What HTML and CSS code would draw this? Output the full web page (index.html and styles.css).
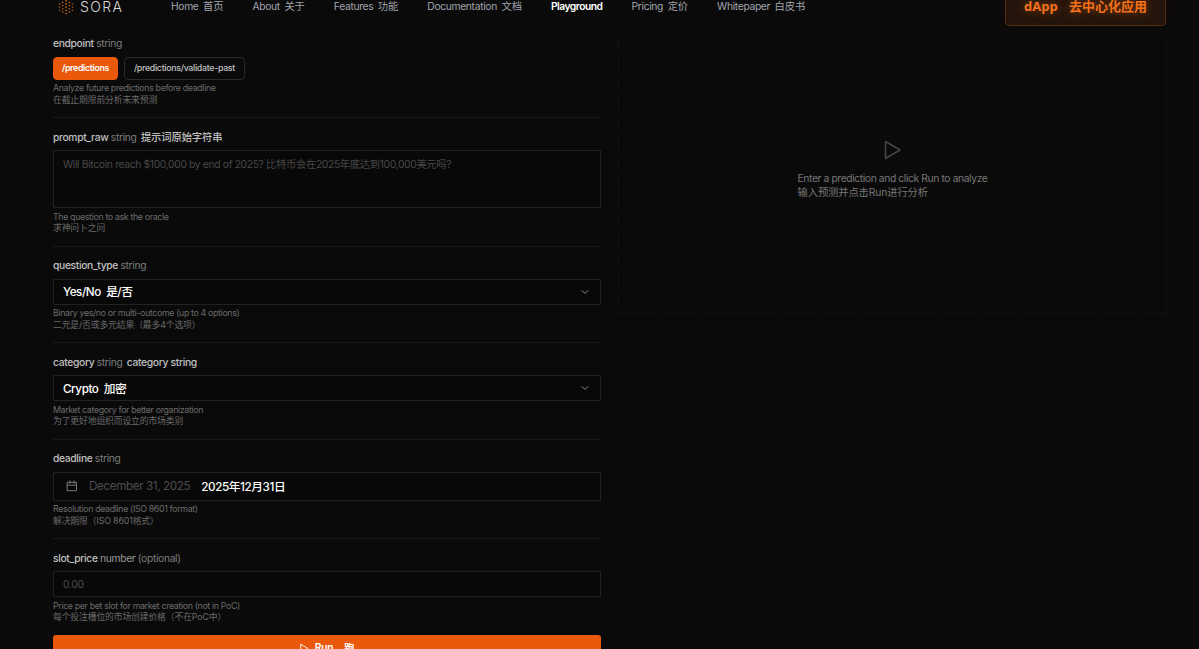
FILE: index.html
```
<!DOCTYPE html>
<html lang="en">
  <head>
    <meta charset="UTF-8" />
    <meta name="viewport" content="width=device-width, initial-scale=1.0" />
    <title>SORA Playground</title>
    <link rel="stylesheet" href="styles.css">
  </head>
  <body>
    <header class="navbar">
      <a class="logo">
        <svg class="logo-mark" viewBox="0 0 16 18" stroke-linecap="round" stroke-width="1.6" fill="none">
          <path stroke="#9a4d10" stroke-dasharray="0.1 3.1" d="M1.5 5.9v7M14.5 5.9v7" />
          <path stroke="#b9590f" stroke-dasharray="0.1 3.1" d="M4.7 4.3v10M11.3 4.3v10" />
          <path stroke="#d9731a" stroke-dasharray="0.1 3.1" d="M8 2.7v13" />
        </svg>
        <span>SORA</span>
      </a>
      <nav class="menu">
        <a>Home <span class="zh">首页</span></a>
        <a>About <span class="zh">关于</span></a>
        <a>Features <span class="zh">功能</span></a>
        <a>Documentation <span class="zh">文档</span></a>
        <a class="active">Playground</a>
        <a>Pricing <span class="zh">定价</span></a>
        <a>Whitepaper <span class="zh">白皮书</span></a>
      </nav>
      <button class="dapp-btn">dApp <span>去中心化应用</span></button>
    </header>

    <main class="playground">
      <form class="params">
        <div class="field">
          <label>endpoint <em>string</em></label>
          <div class="endpoints">
            <button type="button" class="endpoint selected">/predictions</button>
            <button type="button" class="endpoint">/predictions/validate-past</button>
          </div>
          <p class="help">Analyze future predictions before deadline<br /><span class="zh">在截止期限前分析未来预测</span></p>
        </div>

        <div class="field">
          <label>prompt_raw <em>string</em> <span class="translated zh">提示词原始字符串</span></label>
          <div class="control prompt">Will Bitcoin reach $100,000 by end of 2025? 比特币会在2025年底达到100,000美元吗?</div>
          <p class="help">The question to ask the oracle<br /><span class="zh">求神问卜之问</span></p>
        </div>

        <div class="field">
          <label>question_type <em>string</em></label>
          <div class="control select">
            <span>Yes/No&nbsp; 是/否</span>
            <svg class="chevron" viewBox="0 0 10 10"><path d="M2 3.5l3 3 3-3" /></svg>
          </div>
          <p class="help">Binary yes/no or multi-outcome (up to 4 options)<br /><span class="zh">二元是/否或多元结果（最多4个选项）</span></p>
        </div>

        <div class="field">
          <label>category <em>string</em> <span class="translated">category string</span></label>
          <div class="control select">
            <span>Crypto&nbsp; 加密</span>
            <svg class="chevron" viewBox="0 0 10 10"><path d="M2 3.5l3 3 3-3" /></svg>
          </div>
          <p class="help">Market category for better organization<br /><span class="zh">为了更好地组织而设立的市场类别</span></p>
        </div>

        <div class="field">
          <label>deadline <em>string</em></label>
          <div class="control date">
            <svg class="calendar" viewBox="0 0 12 12"><path d="M1.5 2.3h9v8.4h-9zM1.5 5.2h9M3.9 0.8v2.6M8.1 0.8v2.6" /></svg>
            <span class="placeholder">December 31, 2025</span>
            <span class="value">2025年12月31日</span>
          </div>
          <p class="help">Resolution deadline (ISO 8601 format)<br /><span class="zh">解决期限（ISO 8601格式）</span></p>
        </div>

        <div class="field">
          <label>slot_price <em class="number">number</em> <em>(optional)</em></label>
          <div class="control price">0.00</div>
          <p class="help">Price per bet slot for market creation (not in PoC)<br /><span class="zh">每个投注槽位的市场创建价格（不在PoC中）</span></p>
        </div>

        <button type="button" class="run-btn">
          <svg viewBox="0 0 10 12"><path d="M1.2 1.5l7.6 4.5-7.6 4.5z" /></svg>
          <span>Run</span>
          <span>跑</span>
        </button>
      </form>

      <section class="result">
        <svg class="play" viewBox="0 0 18 20"><path d="M1.5 1.5l14.5 8.5-14.5 8.5z" /></svg>
        <p>Enter a prediction and click Run to analyze<br /><span class="zh">输入预测并点击Run进行分析</span></p>
      </section>
    </main>
  </body>
</html>
```
FILE: styles.css
```
* {
  margin: 0;
  padding: 0;
  box-sizing: border-box;
}

body {
  height: 100vh;
  overflow: hidden;
  background-color: #0a0a0a;
  color: #fff;
  font-family: Inter, "Noto Sans CJK SC", sans-serif;
  letter-spacing: -0.34px;
}

button {
  font-family: inherit;
  letter-spacing: inherit;
  cursor: pointer;
}

em {
  font-style: normal;
}

svg path {
  fill: none;
  stroke-linecap: round;
  stroke-linejoin: round;
}

.zh {
  letter-spacing: -0.12px;
}

/* the bar is pulled up, only its lower half shows */
.navbar {
  height: 40px;
  margin-top: -14px;
  padding: 0 33px 0 58px;
  display: flex;
  align-items: center;
}

.logo {
  width: 113px;
  display: flex;
  align-items: center;
  gap: 6px;
  padding-top: 1px;
  color: #d8d8d8;
  font-size: 14px;
  font-weight: 300;
  letter-spacing: 1.4px;
}

.logo-mark {
  width: 16px;
  height: 18px;
}

.menu {
  display: flex;
  gap: 29.1px;
  color: #a1a5ae;
  font-size: 10.3px;
  line-height: 16px;
  white-space: nowrap;
}

.menu span {
  margin-left: 2px;
}

.menu .active {
  color: #fff;
  font-weight: 600;
  letter-spacing: -0.5px;
}

.dapp-btn {
  width: 161px;
  height: 40px;
  margin-left: auto;
  padding-bottom: 1px;
  border: 1px solid #512b12;
  border-radius: 4px;
  background-color: #24150c;
  box-shadow: 0 0 24px rgba(234, 88, 12, 0.06);
  color: #f5711a;
  font-family: "Open Sans", "Noto Sans CJK SC", sans-serif;
  font-size: 13px;
  font-weight: 700;
  letter-spacing: 0;
  text-shadow: 0 0 10px rgba(249, 115, 22, 0.5);
}

.dapp-btn span {
  margin-left: 8px;
}

.playground {
  display: flex;
  gap: 17px;
  padding: 0 32px 0 53px;
}

.params {
  width: 548px;
  flex-shrink: 0;
}

.field {
  height: 96.5px;
  padding-top: 11.5px;
  border-top: 1px solid #191919;
}

.field:first-child {
  height: 91px;
  padding-top: 9px;
  border-top: 1px solid transparent;
}

.field:nth-child(2) {
  height: 128.5px;
}

.field:nth-child(5) {
  height: 99.5px;
}

.field label {
  display: block;
  height: 15px;
  margin-bottom: 5.5px;
  color: #c0c0c0;
  font-size: 10.3px;
  font-weight: 500;
  line-height: 15px;
  white-space: nowrap;
}

.field label em {
  color: #7d7d7d;
  font-weight: 400;
}

.field label .number {
  color: #979797;
}

.translated {
  margin-left: 2px;
}

.endpoints {
  display: flex;
  gap: 6px;
}

.endpoint {
  height: 23px;
  padding: 0 9px 1px;
  border: 1px solid #292929;
  border-radius: 4px;
  background: transparent;
  color: #c2c2c2;
  font-size: 8.8px;
  font-weight: 500;
  letter-spacing: -0.3px;
}

.endpoint.selected {
  padding: 0 8px 1px;
  border-color: #ea580c;
  background-color: #ea580c;
  color: #fff;
  font-weight: 600;
  letter-spacing: -0.36px;
}

.help {
  margin-top: 2.5px;
  color: #6b6b6b;
  font-size: 8.8px;
  line-height: 11.5px;
  white-space: nowrap;
}

.control {
  height: 26px;
  padding: 0 9px;
  display: flex;
  align-items: center;
  border: 1px solid #222;
  border-radius: 1px;
  background-color: #080808;
  white-space: nowrap;
}

.prompt {
  height: 58px;
  padding-top: 6px;
  align-items: flex-start;
  color: #494949;
  font-size: 10.3px;
  line-height: 15px;
}

.select {
  justify-content: space-between;
  font-size: 11.7px;
  font-weight: 500;
  letter-spacing: -0.45px;
}

.select span {
  padding-bottom: 1.5px;
}

.chevron {
  width: 10px;
  height: 10px;
  margin-right: 1px;
}

.chevron path {
  stroke: #858585;
  stroke-width: 1;
}

.date {
  height: 29px;
  padding-left: 12px;
  font-size: 11.7px;
  letter-spacing: -0.4px;
}

.calendar {
  width: 12px;
  height: 12px;
  margin-right: 11px;
}

.calendar path {
  stroke: #777;
  stroke-width: 1;
}

.placeholder {
  color: #4c4c4c;
}

.value {
  margin-left: 11px;
  padding-bottom: 1px;
  font-weight: 500;
}

.price {
  color: #4c4c4c;
  font-size: 10.3px;
}

.run-btn {
  width: 100%;
  height: 28px;
  display: flex;
  align-items: center;
  justify-content: center;
  border: none;
  border-radius: 3px;
  background-color: #ea580c;
  color: #fff;
  font-size: 10.3px;
  font-weight: 600;
}

.run-btn svg {
  width: 9px;
  height: 11px;
  margin-right: 6px;
}

.run-btn path {
  stroke: #fff;
}

.run-btn span {
  padding-bottom: 3px;
}

.run-btn span + span {
  margin-left: 11px;
}

.result {
  height: 274px;
  flex: 1;
  margin-top: 14px;
  padding-bottom: 14px;
  display: flex;
  flex-direction: column;
  align-items: center;
  justify-content: center;
  border: 1px dashed #151515;
  border-top: none;
  color: #777;
  font-size: 10.3px;
  line-height: 14.5px;
  letter-spacing: -0.39px;
}

.play {
  width: 18px;
  height: 20px;
  margin-bottom: 11px;
}

.play path {
  stroke: #444;
  stroke-width: 1.6;
}
```
